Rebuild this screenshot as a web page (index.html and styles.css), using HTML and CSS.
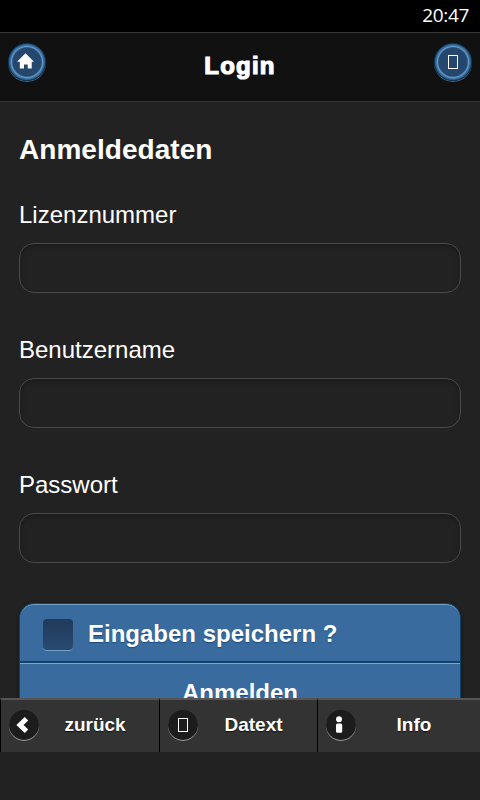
FILE: index.html
```
<!DOCTYPE html>
<html lang="de">
  <head>
    <meta charset="UTF-8" />
    <meta name="viewport" content="width=device-width, initial-scale=1.0" />
    <title>Login</title>
    <link rel="stylesheet" href="styles.css">
  </head>
  <body>
    <div class="statusbar">20:47</div>

    <header class="header">
      <a href="#" class="round-btn" aria-label="Home">
        <svg width="20" height="20" viewBox="0 0 20 20">
          <path d="M9.5 2.3 L18 10.7 H15.7 V17.6 H11.7 V13.5 H8 V17.6 H3.8 V10.7 H1 Z" fill="#fff" />
        </svg>
      </a>
      <h1>Login</h1>
      <a href="#" class="round-btn" aria-label="Optionen"><span class="glyph"></span></a>
    </header>

    <main class="content">
      <h2>Anmeldedaten</h2>
      <form>
        <label for="license">Lizenznummer</label>
        <input type="text" id="license" />
        <label for="username">Benutzername</label>
        <input type="text" id="username" />
        <label for="password">Passwort</label>
        <input type="password" id="password" />

        <div class="group">
          <div class="group-row save-row"><span class="checkbox"></span>Eingaben speichern ?</div>
          <div class="group-row submit-row">Anmelden</div>
        </div>
      </form>
    </main>

    <!-- Navigation -->
    <footer class="navbar">
      <a href="#" class="nav-item">
        <span class="nav-icon">
          <svg width="30" height="30" viewBox="0 0 30 30">
            <path d="M17.5 8.8 L11 15 L17.5 21.2" fill="none" stroke="#fff" stroke-width="5" />
          </svg>
        </span>
        <span class="nav-text">zurück</span>
      </a>
      <a href="#" class="nav-item">
        <span class="nav-icon"><span class="glyph"></span></span>
        <span class="nav-text">Datext</span>
      </a>
      <a href="#" class="nav-item">
        <span class="nav-icon">
          <svg width="30" height="30" viewBox="0 0 30 30">
            <circle cx="13" cy="9.2" r="3" fill="#fff" />
            <rect x="10" y="13.5" width="6.2" height="9.3" rx="1.5" fill="#fff" />
          </svg>
        </span>
        <span class="nav-text">Info</span>
      </a>
    </footer>
  </body>
</html>
```

FILE: styles.css
```
* {
  box-sizing: border-box;
}

body {
  display: flex;
  flex-direction: column;
  height: 800px;
  margin: 0;
  padding-bottom: 48px;
  overflow: hidden;
  background: #222;
  color: #fff;
  font-family: "Liberation Sans", Arial, sans-serif;
}

.statusbar {
  flex: none;
  height: 32px;
  padding-right: 11px;
  background: #000;
  font-family: "Open Sans", sans-serif;
  font-size: 19px;
  line-height: 31px;
  letter-spacing: -0.35px;
  text-align: right;
}

/* Header */
.header {
  flex: none;
  display: flex;
  justify-content: space-between;
  height: 70px;
  padding: 10px 8px 0;
  background: #111;
  border-top: 1px solid #383838;
  border-bottom: 1px solid #333;
}

h1 {
  margin: 9px 0 0;
  font-size: 24px;
  line-height: 28px;
  letter-spacing: 1.2px;
  -webkit-text-stroke: 1.2px #fff;
}

.round-btn {
  display: flex;
  align-items: center;
  justify-content: center;
  width: 38px;
  height: 38px;
  border: 1px solid #0d3c60;
  border-radius: 50%;
  background: radial-gradient(circle, #25466d 0 14px, #6296c4 15.5px, #34699d 17px, #225984 19px);
  box-shadow: 0 1px 0 #45617a;
}

.round-btn svg {
  margin-right: 2px;
  margin-bottom: 2px;
}

.glyph {
  width: 10px;
  height: 14px;
  border: 1px solid #fff;
}

/* Form */
.content {
  flex: 1;
  min-height: 0;
  padding: 0 19px;
  overflow: hidden;
}

h2 {
  margin: 32px 0 0;
  font-size: 28px;
  line-height: 32px;
  letter-spacing: 0.05px;
}

label {
  display: block;
  margin-top: 34px;
  font-size: 24px;
  line-height: 28px;
}

h2 + form label:first-child {
  margin-top: 35px;
}

input {
  display: block;
  width: 442px;
  height: 50px;
  margin: 14px 0 43px;
  padding: 0 14px;
  border: 1px solid #4a4a4a;
  border-radius: 15px;
  background: #222;
  box-shadow: inset 0 2px 4px rgba(0, 0, 0, 0.25);
  color: #fff;
  font-size: 24px;
}

.group {
  width: 442px;
  margin-top: -3px;
  border: 1px solid #104367;
  border-radius: 15px 15px 0 0;
  background: #396b9e;
  box-shadow: 0 1px 4px rgba(0, 0, 0, 0.3);
  overflow: hidden;
  font-size: 24px;
  font-weight: bold;
  text-shadow: 0 1px 1px #194b7e;
}

.group-row {
  border-top: 1px solid #70a0c8;
}

.save-row {
  display: flex;
  align-items: center;
  gap: 15px;
  height: 59px;
  padding-left: 23px;
  padding-bottom: 1px;
  border-radius: 14px 14px 0 0;
}

.checkbox {
  width: 30px;
  height: 32px;
  margin-top: 2px;
  border-radius: 4px;
  background: linear-gradient(#213a5b, #294a70);
  border-bottom: 1px solid #74a0c8;
}

.submit-row {
  height: 60px;
  border-top: 1px solid #78a8cd;
  box-shadow: 0 -2px 0 #104367;
  line-height: 58px;
  text-align: center;
}

/* Bottom navigation */
.navbar {
  flex: none;
  display: grid;
  grid-template-columns: 159px 158px 163px;
  height: 54px;
}

.nav-item {
  display: flex;
  align-items: center;
  padding: 0 0 2px 8px;
  border-top: 2px solid #555;
  border-left: 1px solid #000;
  background: #333;
  color: #fff;
  font-size: 19px;
  font-weight: bold;
  text-decoration: none;
  text-shadow: 0 1px 1px #111;
}

.nav-icon {
  display: flex;
  align-items: center;
  justify-content: center;
  width: 30px;
  height: 30px;
  border-radius: 50%;
  background: #1c1c1c;
  box-shadow: 0 1px 0 #999;
}

.nav-text {
  flex: 1;
  padding-right: 8px;
  text-align: center;
}
```
